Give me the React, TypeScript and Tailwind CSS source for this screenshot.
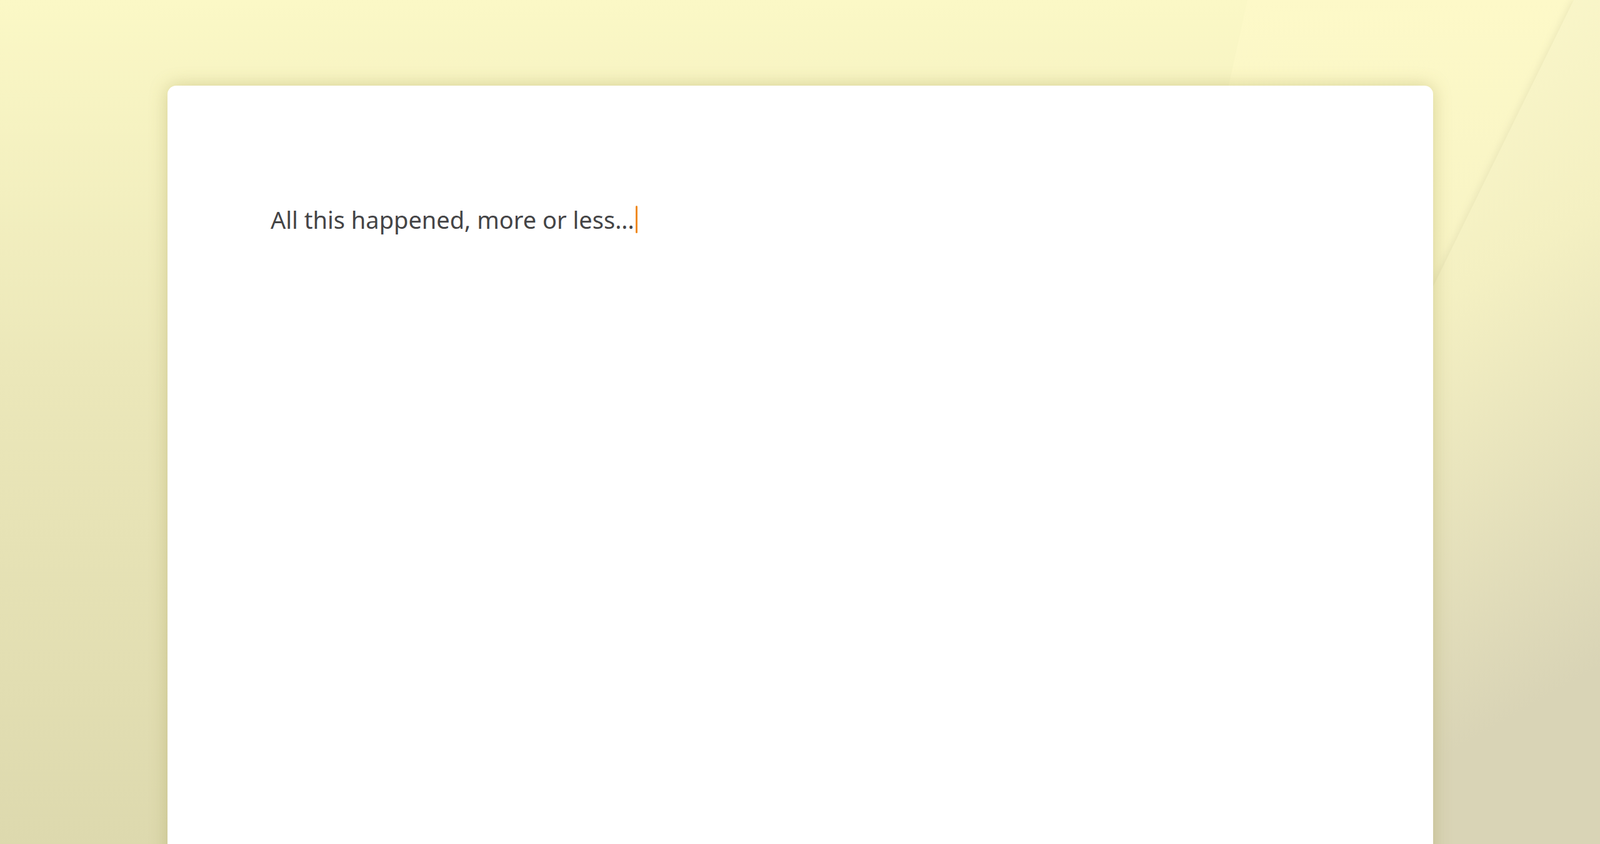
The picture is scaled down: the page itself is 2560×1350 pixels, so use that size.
export default function App() {
  return (
    <div className="relative w-[2560px] h-[1350px] overflow-hidden bg-[linear-gradient(180deg,#fbf8c6_0%,#ebe7b9_45%,#ddd9ae_100%)]">
      <svg className="absolute inset-0" width="2560" height="1350" viewBox="0 0 2560 1350">
        <defs>
          <linearGradient id="g1" x1="0" y1="0" x2="0" y2="1">
            <stop offset="0" stopColor="#fdf9c8" />
            <stop offset="1" stopColor="#ece8bd" />
          </linearGradient>
          <linearGradient id="g2" x1="0" y1="0" x2="0.3" y2="1">
            <stop offset="0" stopColor="#fefbcf" />
            <stop offset="0.5" stopColor="#f4f0c2" />
            <stop offset="1" stopColor="#d9d4b6" />
          </linearGradient>
          <filter id="b"><feGaussianBlur stdDeviation="6" /></filter>
        </defs>
        <polygon points="1996,0 2560,0 2560,1350 1700,1350" fill="url(#g1)" />
        <polygon points="2515,0 2560,0 2560,1350 1850,1350" fill="#cfcaa0" opacity="0.35" filter="url(#b)" />
        <polygon points="2518,0 2560,0 2560,1350 1855,1350" fill="url(#g2)" />
      </svg>
      <div className="relative ml-[268px] mt-[137px] w-[2025px] h-[1300px] bg-white rounded-t-[14px] shadow-[0_0_28px_rgba(150,140,60,0.35)] pl-[165px] pt-[190px]">
        <div className="flex items-center text-[38px] leading-[48px] text-[#444446] font-['Inter','Noto_Sans',sans-serif]">
          <span>All this happened, more or less...</span>
          <span className="ml-[2px] w-[3px] h-[44px] bg-[#f08a1c] rounded-full" />
        </div>
      </div>
    </div>
  );
}
